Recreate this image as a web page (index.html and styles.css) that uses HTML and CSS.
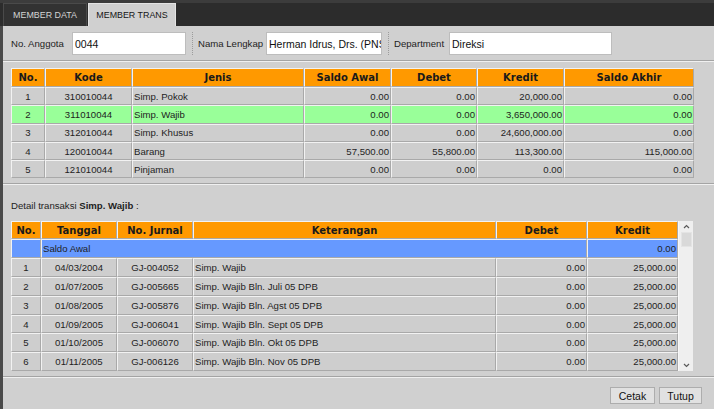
FILE: index.html
```html
<!DOCTYPE html>
<html>
<head>
<meta charset="utf-8">
<title>Member Trans</title>
<link rel="stylesheet" href="styles.css">
</head>
<body>
<div class="app">
  <div class="tabbar">
    <div class="tab">MEMBER DATA</div>
    <div class="tab active">MEMBER TRANS</div>
  </div>
  <div class="panel">
    <div class="form">
      <span class="lbl lbl1">No. Anggota</span>
      <div class="field f1">0044</div>
      <span class="sep"></span>
      <span class="lbl lbl2">Nama Lengkap</span>
      <div class="field f2">Herman Idrus, Drs. (PNS)</div>
      <span class="sep"></span>
      <span class="lbl lbl3">Department</span>
      <div class="field f3">Direksi</div>
    </div>
    <div class="groove"></div>

    <div class="grid1">
      <table class="t1">
        <thead>
          <tr>
            <th class="w-no">No.</th>
            <th class="w-kode">Kode</th>
            <th class="w-jenis">Jenis</th>
            <th class="w-sa">Saldo Awal</th>
            <th class="w-db">Debet</th>
            <th class="w-kr">Kredit</th>
            <th class="w-sk">Saldo Akhir</th>
          </tr>
        </thead>
        <tbody>
          <tr><td class="c">1</td><td class="c">310010044</td><td>Simp. Pokok</td><td class="r">0.00</td><td class="r">0.00</td><td class="r">20,000.00</td><td class="r">0.00</td></tr>
          <tr class="sel"><td class="c">2</td><td class="c">311010044</td><td>Simp. Wajib</td><td class="r">0.00</td><td class="r">0.00</td><td class="r">3,650,000.00</td><td class="r">0.00</td></tr>
          <tr><td class="c">3</td><td class="c">312010044</td><td>Simp. Khusus</td><td class="r">0.00</td><td class="r">0.00</td><td class="r">24,600,000.00</td><td class="r">0.00</td></tr>
          <tr><td class="c">4</td><td class="c">120010044</td><td>Barang</td><td class="r">57,500.00</td><td class="r">55,800.00</td><td class="r">113,300.00</td><td class="r">115,000.00</td></tr>
          <tr><td class="c">5</td><td class="c">121010044</td><td>Pinjaman</td><td class="r">0.00</td><td class="r">0.00</td><td class="r">0.00</td><td class="r">0.00</td></tr>
        </tbody>
      </table>
    </div>
    <div class="groove g2"></div>

    <div class="detail">Detail transaksi <b>Simp. Wajib</b> :</div>

    <div class="pane">
      <div class="viewport">
        <table class="t2">
          <thead>
            <tr>
              <th class="v-no">No.</th>
              <th class="v-tgl">Tanggal</th>
              <th class="v-jur">No. Jurnal</th>
              <th class="v-ket">Keterangan</th>
              <th class="v-db">Debet</th>
              <th class="v-kr">Kredit</th>
            </tr>
          </thead>
          <tbody>
            <tr class="saldo"><td></td><td colspan="4">Saldo Awal</td><td class="r">0.00</td></tr>
            <tr><td class="c">1</td><td class="c">04/03/2004</td><td class="c">GJ-004052</td><td>Simp. Wajib</td><td class="r">0.00</td><td class="r">25,000.00</td></tr>
            <tr><td class="c">2</td><td class="c">01/07/2005</td><td class="c">GJ-005665</td><td>Simp. Wajib Bln. Juli 05 DPB</td><td class="r">0.00</td><td class="r">25,000.00</td></tr>
            <tr><td class="c">3</td><td class="c">01/08/2005</td><td class="c">GJ-005876</td><td>Simp. Wajib Bln. Agst 05 DPB</td><td class="r">0.00</td><td class="r">25,000.00</td></tr>
            <tr><td class="c">4</td><td class="c">01/09/2005</td><td class="c">GJ-006041</td><td>Simp. Wajib Bln. Sept 05 DPB</td><td class="r">0.00</td><td class="r">25,000.00</td></tr>
            <tr><td class="c">5</td><td class="c">01/10/2005</td><td class="c">GJ-006070</td><td>Simp. Wajib Bln. Okt 05 DPB</td><td class="r">0.00</td><td class="r">25,000.00</td></tr>
            <tr><td class="c">6</td><td class="c">01/11/2005</td><td class="c">GJ-006126</td><td>Simp. Wajib Bln. Nov 05 DPB</td><td class="r">0.00</td><td class="r">25,000.00</td></tr>
            <tr><td></td><td></td><td></td><td></td><td></td><td></td></tr>
          </tbody>
        </table>
      </div>
      <div class="vscroll">
        <span class="arrow">
          <svg width="7" height="5" viewBox="0 0 7 5"><polyline points="1,4 3.5,1.5 6,4" fill="none" stroke="#5a5a5a" stroke-width="1.2"/></svg>
        </span>
        <span class="thumb"></span>
        <span class="track"></span>
        <span class="arrow down">
          <svg width="7" height="5" viewBox="0 0 7 5"><polyline points="1,1 3.5,3.5 6,1" fill="none" stroke="#5a5a5a" stroke-width="1.2"/></svg>
        </span>
      </div>
    </div>
    <div class="groove g3"></div>

    <div class="buttons">
      <button class="btn b-cetak">Cetak</button>
      <button class="btn b-tutup">Tutup</button>
    </div>
  </div>
</div>
</body>
</html>
```

FILE: styles.css
```css
* { box-sizing: border-box; margin: 0; padding: 0; }
html, body { width: 714px; height: 409px; overflow: hidden; }
body {
  background: #d0d0d0;
  font-family: "Liberation Sans", Arial, sans-serif;
  font-size: 9.6px;
  color: #1e1e1e;
}
.app { display: flex; flex-direction: column; height: 409px; }

/* tabs */
.tabbar {
  height: 26px;
  background: #2c2c2c;
  border-top: 3px solid #3c3c3c;
  display: flex;
  align-items: flex-end;
  padding-left: 3px;
}
.tab {
  height: 23px;
  width: 84px;
  display: flex;
  align-items: center;
  justify-content: center;
  font-size: 8.9px;
  color: #d4d4d4;
  background: #323232;
  border: 1px solid #4a4a4a;
  border-bottom: none;
}
.tab.active {
  width: 88px;
  margin-left: 1px;
  background: #d0d0d0;
  color: #151515;
  border-color: #e4e4e4;
}

/* panel */
.panel {
  flex: 1;
  display: flex;
  flex-direction: column;
  border-left: 3px solid #4a4a4a;
}
.form {
  height: 34px;
  padding: 6px 0 5px 8px;
  display: flex;
  align-items: center;
}
.lbl { white-space: nowrap; }
.lbl1 { width: 61px; }
.lbl2 { width: 68px; }
.lbl3 { width: 55px; }
.field {
  height: 23px;
  background: #fff;
  border: 1px solid #bdbdbd;
  font-size: 10.5px;
  color: #111;
  padding: 0 2px;
  display: flex;
  align-items: center;
  white-space: nowrap;
  overflow: hidden;
}
.f1 { width: 114px; }
.f2 { width: 116px; }
.f3 { width: 163px; }
.sep {
  width: 1px;
  height: 23px;
  border-left: 1px dotted #9c9c9c;
  margin: 0 5px 0 6px;
}
.groove {
  height: 2px;
  border-top: 1px solid #a4a4a4;
  border-bottom: 1px solid #f0f0f0;
}
.g2 { margin-top: 5px; }
.g3 { margin-top: 5px; }

/* tables */
table {
  border-collapse: separate;
  border-spacing: 0;
  table-layout: fixed;
}
th, td {
  border-top: 1px solid #f2f2f2;
  border-left: 1px solid #f2f2f2;
  border-right: 1px solid #a9a9a9;
  border-bottom: 1px solid #a9a9a9;
  white-space: nowrap;
  overflow: hidden;
  padding: 0 1px;
  vertical-align: middle;
}
th {
  background: #ff9900;
  font-family: "DejaVu Sans", Verdana, sans-serif;
  font-weight: bold;
  font-size: 10px;
  color: #1a1a1a;
  text-align: center;
}
td { background: #cecece; }
.c { text-align: center; }
.r { text-align: right; }

.grid1 { margin: 6px 0 0 8px; }
.t1 { width: 683px; }
.t1 thead tr { height: 19px; }
.t1 tbody tr { height: 18.3px; }
.w-no { width: 34px; }
.w-kode { width: 87px; }
.w-jenis { width: 172px; }
.w-sa { width: 87px; }
.w-db { width: 86px; }
.w-kr { width: 87px; }
.w-sk { width: 130px; }
tr.sel td { background: #99ff99; }

.detail {
  margin: 14px 0 8px 8px;
  height: 14px;
  line-height: 14px;
}
.detail b { font-weight: bold; }

.pane {
  display: flex;
  margin-left: 8px;
  width: 682px;
  height: 150px;
}
.viewport { width: 667px; height: 150px; overflow: hidden; }
.t2 { width: 667px; }
.t2 thead tr { height: 18px; }
.t2 tbody tr { height: 18.75px; }
.t2 tbody tr.saldo { height: 19px; }
tr.saldo td { background: #6699ff; }
.v-no { width: 30px; }
.v-tgl { width: 76px; }
.v-jur { width: 76px; }
.v-ket { width: 303px; }
.v-db { width: 91px; }
.v-kr { width: 91px; }

.vscroll {
  width: 15px;
  background: #efefef;
  border-left: 1px solid #f8f8f8;
  display: flex;
  flex-direction: column;
  align-items: center;
}
.arrow {
  height: 11px;
  width: 100%;
  display: flex;
  align-items: center;
  justify-content: center;
}
.arrow.down { height: 12px; }
.thumb {
  width: 11px;
  height: 15px;
  background: #d9d9d9;
  border: 1px solid #e4e4e4;
}
.track { flex: 1; }

.buttons {
  display: flex;
  justify-content: flex-end;
  gap: 4px;
  padding: 9px 12px 0 0;
}
.btn {
  height: 17px;
  font-family: "Liberation Sans", Arial, sans-serif;
  font-size: 10.5px;
  color: #111;
  background: #e1e1e1;
  border: 1px solid #adadad;
}
.b-cetak { width: 45px; }
.b-tutup { width: 43px; }
```
